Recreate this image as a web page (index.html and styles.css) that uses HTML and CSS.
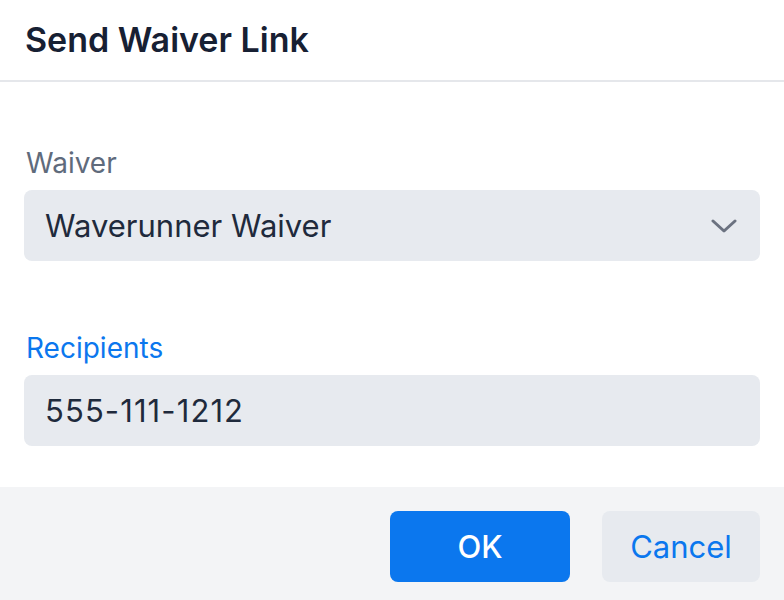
FILE: index.html
```html
<!DOCTYPE html>
<html lang="en">
<head>
    <meta charset="UTF-8">
    <meta name="viewport" content="width=device-width, initial-scale=1.0">
    <title>Send Waiver Link</title>
    <link rel="stylesheet" href="styles.css">
</head>
<body>
<div class="modal">
    <div class="modal-header">
        <h1>Send Waiver Link</h1>
    </div>

    <div class="modal-body">
        <div class="field">
            <label for="waiver">Waiver</label>
            <div class="select">
                <span id="waiver">Waverunner Waiver</span>
                <svg class="chevron" width="26" height="14" viewBox="0 0 26 14">
                    <path d="M2 2 L13 12 L24 2" fill="none" stroke="#6b7280" stroke-width="3" stroke-linecap="round" stroke-linejoin="round"/>
                </svg>
            </div>
        </div>

        <div class="field field-active">
            <label for="recipients">Recipients</label>
            <input type="text" id="recipients" value="555-111-1212">
        </div>
    </div>

    <div class="modal-footer">
        <button class="btn btn-primary">OK</button>
        <button class="btn btn-secondary">Cancel</button>
    </div>
</div>
</body>
</html>
```

FILE: styles.css
```css
body {
    margin: 0;
    font-family: Inter, "Noto Sans", sans-serif;
    background: #fff;
    color: #1e293b;
}
.modal {
    width: 784px;
    height: 600px;
    display: flex;
    flex-direction: column;
}
.modal-header {
    flex-shrink: 0;
    height: 80px;
    padding: 0 25px;
    border-bottom: 2px solid #e5e7eb;
    display: flex;
    align-items: center;
}
.modal-header h1 {
    margin: 0 0 2px;
    font-size: 34px;
    font-weight: 600;
    color: #172033;
}
.modal-body {
    flex: 1;
    padding: 62px 24px 0;
}
.field {
    margin-bottom: 68px;
}
.field:last-child {
    margin-bottom: 0;
}
.field label {
    display: block;
    font-size: 28px;
    line-height: 38px;
    margin: 0 2px 8px;
    color: #5f6b7c;
}
.field-active label {
    color: #0b77ee;
}
.select,
.field input {
    box-sizing: border-box;
    width: 100%;
    height: 71px;
    padding: 0 21px;
    border: none;
    border-radius: 8px;
    background: #e7eaef;
    font-family: inherit;
    font-size: 31px;
    color: #1f2a3c;
    outline: none;
}
.field input {
    letter-spacing: 1.1px;
}
.select {
    display: flex;
    align-items: center;
    justify-content: space-between;
}
.chevron {
    margin-right: 2px;
}
.modal-footer {
    flex-shrink: 0;
    height: 113px;
    box-sizing: border-box;
    padding: 24px 24px 0;
    background: #f3f4f6;
    display: flex;
    justify-content: flex-end;
    align-items: flex-start;
    gap: 32px;
}
.btn {
    height: 71px;
    border: none;
    border-radius: 8px;
    font-family: inherit;
    font-size: 31px;
    cursor: pointer;
}
.btn-primary {
    width: 180px;
    background: #0b77ee;
    color: #fff;
    font-weight: 500;
}
.btn-secondary {
    width: 158px;
    background: #e7eaef;
    color: #0b77ee;
}
```
